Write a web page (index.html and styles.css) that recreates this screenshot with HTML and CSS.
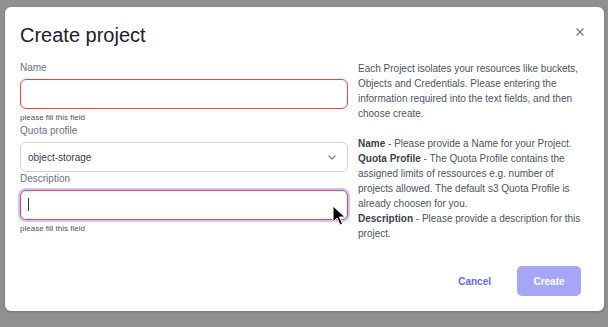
FILE: index.html
```html
<html lang="en">

<head>
    <meta charset="UTF-8">
    <meta name="viewport" content="width=device-width, initial-scale=1.0">
    <title>Create project</title>
    <link rel="stylesheet" href="styles.css">
</head>

<body>
    <div class="modal">
        <div class="modal-header">
            <h2 class="modal-title">Create project</h2>
            <button class="close-button" aria-label="Close">
                <svg width="8" height="8" viewBox="0 0 8 8">
                    <path d="M0.5 0.5 L7.5 7.5 M7.5 0.5 L0.5 7.5" stroke="#6b7280" stroke-width="1.1" fill="none" />
                </svg>
            </button>
        </div>

        <div class="modal-body">
            <form class="project-form">
                <label class="field-label">Name</label>
                <input class="field-input invalid" type="text">
                <p class="field-error">please fill this field</p>

                <label class="field-label">Quota profile</label>
                <div class="select-wrap">
                    <select class="field-input field-select">
                        <option>object-storage</option>
                    </select>
                    <svg class="chevron" width="8" height="5" viewBox="0 0 8 5">
                        <path d="M0.6 0.6 L4 4 L7.4 0.6" stroke="#6b7280" stroke-width="1.2" fill="none" />
                    </svg>
                </div>

                <label class="field-label">Description</label>
                <div class="input-wrap">
                    <input class="field-input invalid focused" type="text">
                    <span class="caret"></span>
                    <svg class="mouse-cursor" width="14" height="22" viewBox="0 0 14 22">
                        <path d="M1 1 L1 17 L5 13 L8 20 L10.5 19 L7.5 12 L13 12 Z" fill="#000" stroke="#fff" stroke-width="1" />
                    </svg>
                </div>
                <p class="field-error">please fill this field</p>
            </form>

            <div class="help-text">
                <p class="help-intro">
                    Each Project isolates your resources like buckets, Objects and Credentials. Please entering the
                    information required into the text fields, and then choose create.
                </p>
                <p class="help-fields">
                    <b>Name</b> - Please provide a Name for your Project.<br>
                    <b>Quota Profile</b> - The Quota Profile contains the assigned limits of ressources e.g. number of
                    projects allowed. The default s3 Quota Profile is already choosen for you.<br>
                    <b>Description</b> - Please provide a description for this project.
                </p>
            </div>
        </div>

        <div class="modal-footer">
            <button class="cancel-button">Cancel</button>
            <button class="create-button">Create</button>
        </div>
    </div>
</body>

</html>
```

FILE: styles.css
```css
body {
    margin: 0;
    padding: 7px 0 0 5px;
    background-color: #8f9092;
    font-family: "Liberation Sans", Arial, sans-serif;
}

.modal {
    width: 599px;
    background-color: #fff;
    border-radius: 6px;
    box-shadow: 0 1px 3px rgba(0, 0, 0, 0.2);
}

.modal-header {
    display: flex;
    justify-content: space-between;
    align-items: flex-start;
    padding: 14px 15px 0 15px;
}

.modal-title {
    margin: 0;
    font-size: 20px;
    line-height: 28px;
    font-weight: 400;
    color: #1a202c;
}

.close-button {
    width: 18px;
    height: 18px;
    margin-top: 2px;
    padding: 0;
    border: none;
    background: none;
    display: flex;
    align-items: center;
    justify-content: center;
    cursor: pointer;
}

.modal-body {
    display: grid;
    grid-template-columns: 328px 1fr;
    column-gap: 10px;
    padding: 12px 15px 0 15px;
}

.project-form {
    margin: 0;
    display: flex;
    flex-direction: column;
}

.field-label {
    font-size: 10px;
    line-height: 14px;
    color: #6b7280;
    margin-bottom: 4px;
}

.field-input {
    box-sizing: border-box;
    width: 328px;
    height: 30px;
    margin: 0;
    padding: 0 7px;
    border: 1px solid #d1d5db;
    border-radius: 6px;
    font-family: "Liberation Sans", Arial, sans-serif;
    font-size: 10px;
    color: #374151;
    background-color: #fff;
    outline: none;
}

.field-input.invalid {
    border-color: #ef4444;
}

.field-input.focused {
    box-shadow: 0 0 0 2px #c3c8fa;
}

.field-select {
    appearance: none;
    -webkit-appearance: none;
}

.select-wrap,
.input-wrap {
    position: relative;
}

.chevron {
    position: absolute;
    right: 12px;
    top: 13px;
}

.caret {
    position: absolute;
    left: 8px;
    top: 8px;
    width: 1px;
    height: 13px;
    background-color: #374151;
}

.mouse-cursor {
    position: absolute;
    left: 312px;
    top: 15px;
}

.field-error {
    margin: 3px 0 0 0;
    font-size: 8px;
    line-height: 12px;
    font-variant-ligatures: none;
    color: #4b5563;
}

.help-text {
    font-size: 10px;
    line-height: 15px;
    color: #4b5563;
}

.help-text p {
    margin: 0;
}

.help-text .help-intro {
    margin-bottom: 15px;
}

.help-text b {
    color: #374151;
}

.modal-footer {
    display: flex;
    justify-content: flex-end;
    gap: 10px;
    padding: 25px 23px 15px 15px;
}

.cancel-button,
.create-button {
    height: 30px;
    border: none;
    border-radius: 5px;
    font-family: "Liberation Sans", Arial, sans-serif;
    font-size: 10px;
    font-weight: 700;
    cursor: pointer;
}

.cancel-button {
    padding: 0 16px;
    background: none;
    color: #6366f1;
}

.create-button {
    width: 64px;
    padding: 0;
    background-color: #a5a6f6;
    color: #fff;
}
```
